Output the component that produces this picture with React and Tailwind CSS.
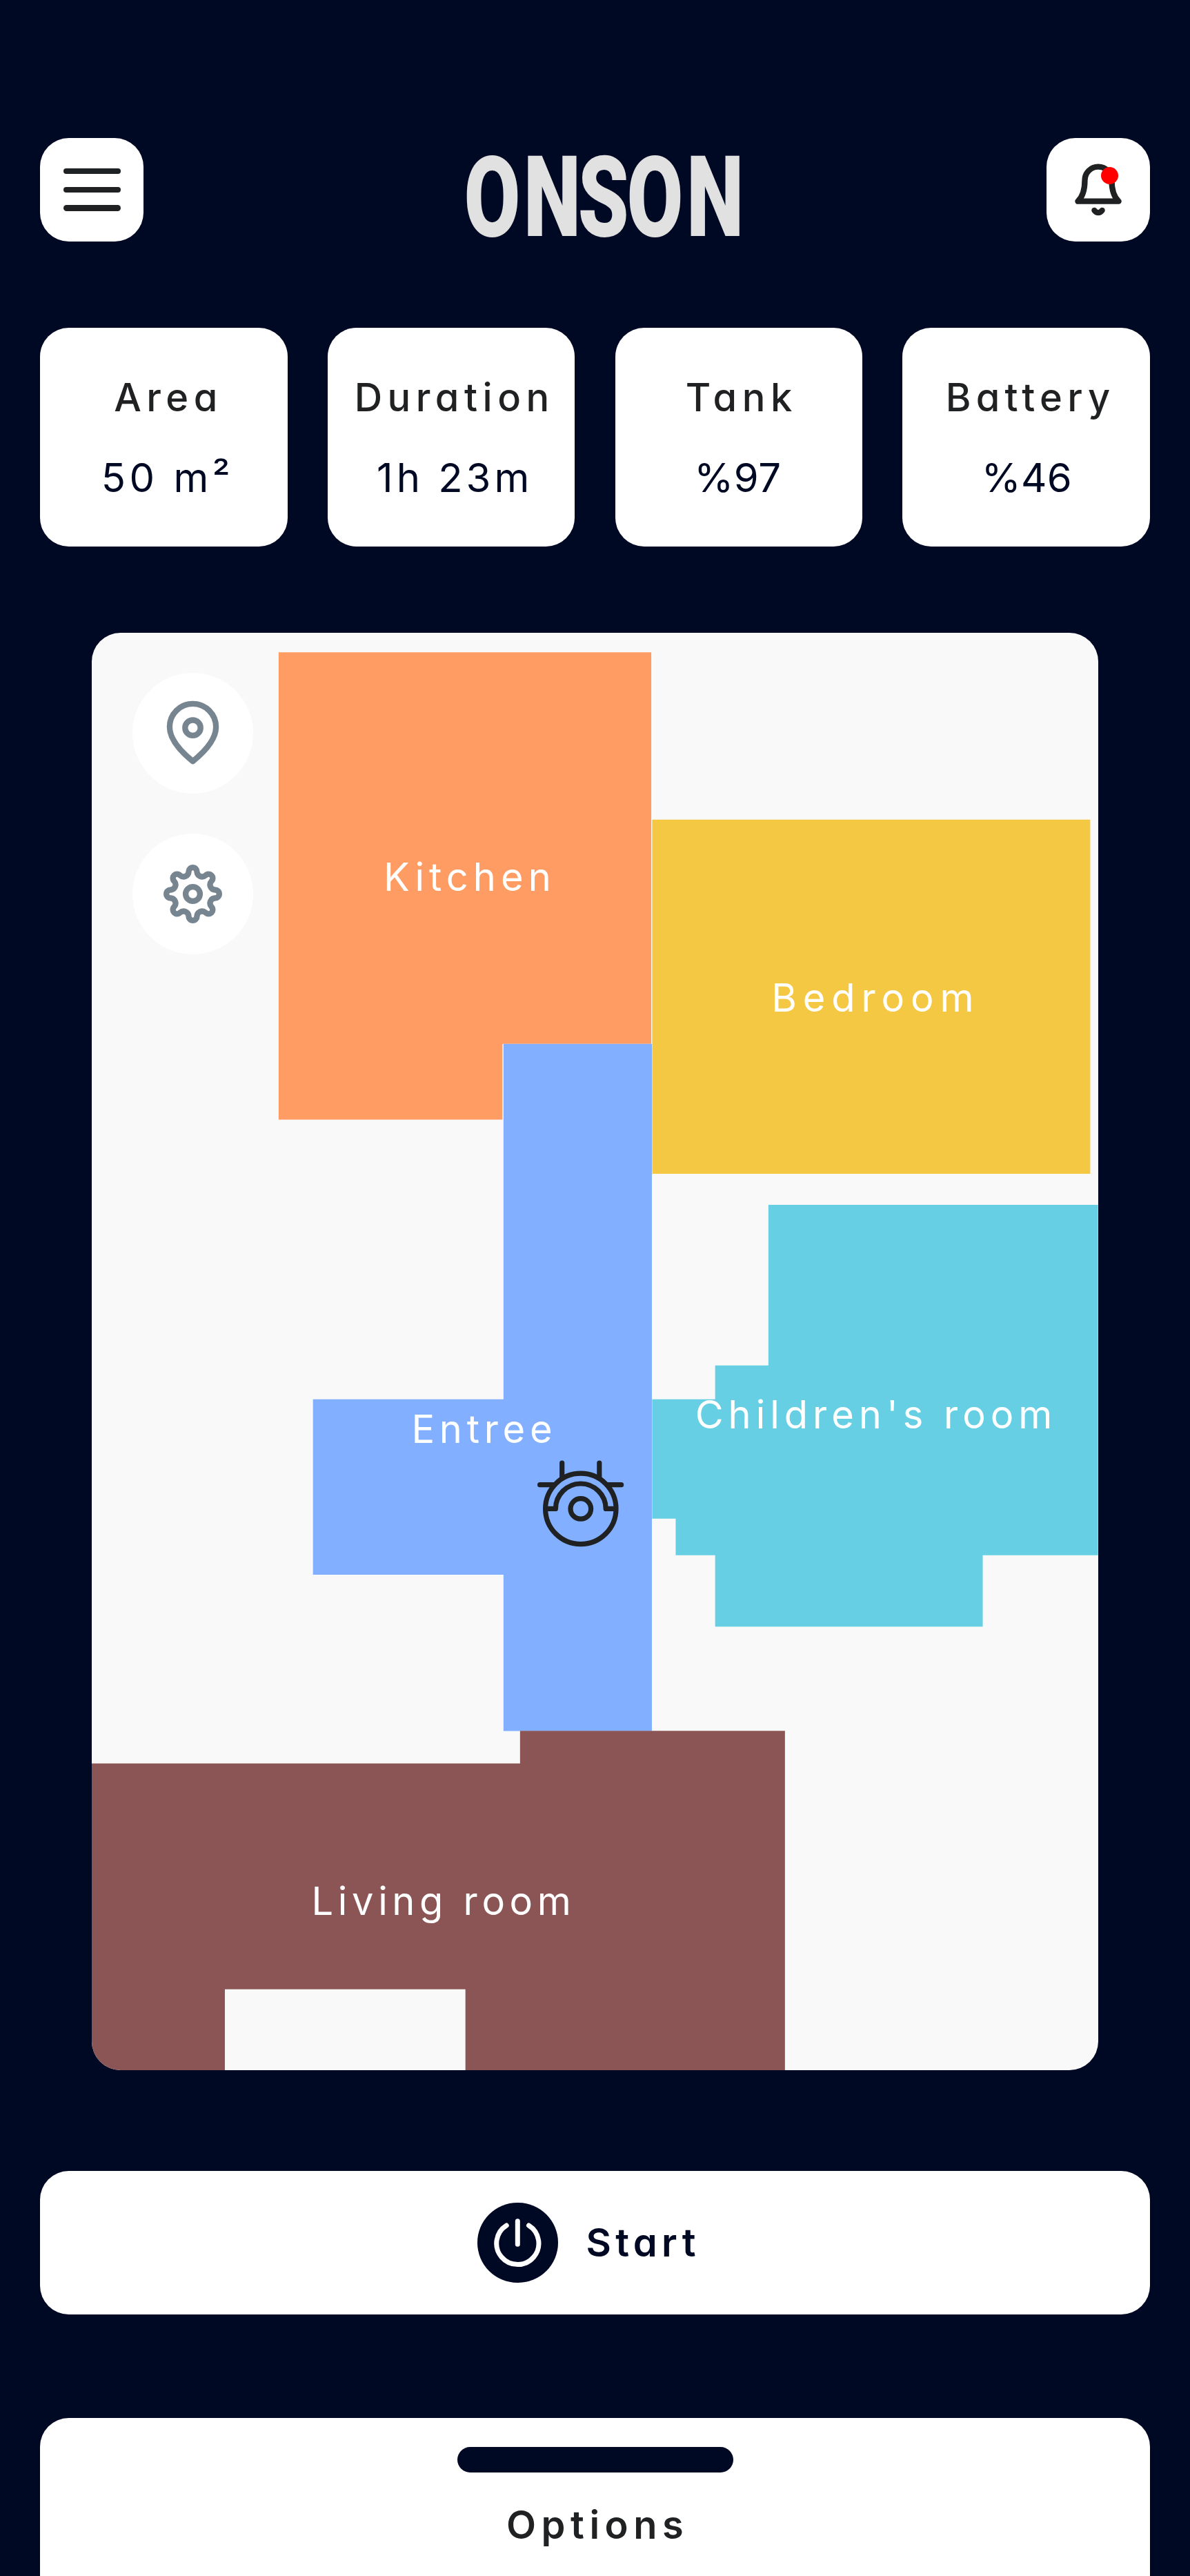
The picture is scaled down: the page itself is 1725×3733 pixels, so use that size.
import React from "react";

const stats = [
  { label: "Area", value: "50 m²", labelClass: "tracking-[7.46px] pl-[13px]", valueClass: "tracking-[5.5px] pl-[10.6px]" },
  { label: "Duration", value: "1h 23m", labelClass: "tracking-[7.5px] pl-[9px]", valueClass: "tracking-[5px] pl-[10px]" },
  { label: "Tank", value: "%97", labelClass: "tracking-[7.6px] pl-[8px]", valueClass: "tracking-[0.6px] pr-[2.6px]" },
  { label: "Battery", value: "%46", labelClass: "tracking-[7.24px] pl-[12px]", valueClass: "tracking-[0.3px] pl-[1.6px]" },
];

const rooms = [
  { name: "Kitchen", className: "left-[422.6px] top-[326.7px] tracking-[7.03px]" },
  { name: "Bedroom", className: "left-[984.9px] top-[501.5px] tracking-[8.9px]" },
  { name: "Entree", className: "left-[463.1px] top-[1126.7px] tracking-[6.73px]" },
  { name: "Children's room", className: "left-[874.3px] top-[1105.4px] tracking-[7px]" },
  { name: "Living room", className: "left-[318.1px] top-[1810px] tracking-[6.67px]" },
];

// Outline of an eight-toothed gear built from tangent arcs around (cx, cy).
function gearPath(cx, cy) {
  const toothR = 6;
  const toothD = 31.5;
  const valleyR = 7.5;
  const valleyD = 35.2;
  const at = (d, deg) => {
    const a = ((deg - 90) * Math.PI) / 180;
    return [cx + d * Math.cos(a), cy + d * Math.sin(a)];
  };
  const tangent = (tooth, valley) => {
    const t = toothR / (toothR + valleyR);
    const x = tooth[0] + (valley[0] - tooth[0]) * t;
    const y = tooth[1] + (valley[1] - tooth[1]) * t;
    return `${x.toFixed(2)} ${y.toFixed(2)}`;
  };
  let d = "";
  for (let i = 0; i < 8; i++) {
    const deg = i * 45;
    const tooth = at(toothD, deg);
    const start = tangent(tooth, at(valleyD, deg - 22.5));
    const end = tangent(tooth, at(valleyD, deg + 22.5));
    d += i === 0 ? `M${start}` : `A${valleyR} ${valleyR} 0 0 0 ${start}`;
    d += `A${toothR} ${toothR} 0 1 1 ${end}`;
  }
  const first = tangent(at(toothD, 0), at(valleyD, -22.5));
  return `${d}A${valleyR} ${valleyR} 0 0 0 ${first}Z`;
}

function MenuButton() {
  return (
    <button className="flex h-[150px] w-[150px] flex-col items-center gap-[18.5px] rounded-[41.67px] bg-white pt-[43.7px]">
      <span className="h-[8.33px] w-[83.33px] rounded-full bg-[#1f2122]" />
      <span className="h-[8.33px] w-[83.33px] rounded-full bg-[#1f2122]" />
      <span className="h-[8.33px] w-[83.33px] rounded-full bg-[#1f2122]" />
    </button>
  );
}

function Logo() {
  return (
    <svg className="h-[118px] w-[400px] overflow-visible" viewBox="0 0 400 118" aria-label="ONSON">
      <text
        transform="scale(0.72 1)"
        x="57.6 178.5 281.5 385.5 506.5"
        y="116.7"
        textAnchor="middle"
        fill="#e1e1e1"
        className="font-['Roboto',sans-serif] text-[164px] font-black"
      >
        ONSON
      </text>
    </svg>
  );
}

function BellButton() {
  return (
    <button className="relative h-[150px] w-[150px] rounded-[41.67px] bg-white">
      <svg
        className="h-full w-full"
        viewBox="0 0 150 150"
        fill="none"
        stroke="#1f2122"
        strokeWidth="8.33"
        strokeLinecap="round"
        strokeLinejoin="round"
      >
        <path d="M45.4 91.7C52 85.5 55.5 74 55.5 61.2A19.5 19.5 0 0 1 94.5 61.2C94.5 74 98 85.5 104.6 91.7Z" />
        <path d="M69.4 104.8Q75 111.6 80.6 104.8" />
      </svg>
      <span className="absolute left-[79.2px] top-[41.7px] h-[25px] w-[25px] rounded-full bg-[#ff0000]" />
    </button>
  );
}

function FloorPlan() {
  return (
    <svg className="absolute inset-0 h-full w-full" viewBox="133.33 916.67 1458.34 2083.33">
      <path fill="#ff9c63" d="M404.2 945H944.4V1512.3H728.7V1622.2H404.2Z" />
      <path fill="#f4c843" d="M945.7 1187.3H1580.7V1700.6H945.7Z" />
      <path
        fill="#66cfe4"
        d="M1114.2 1745.6H1592V2253.4H1424.9V2357H1037V2253.4H979.8V2200.5H945.7V2027.5H1037V1978.5H1114.2Z"
      />
      <path fill="#82afff" d="M730.2 1512.3H945.3V2508.3H730.2V2281.7H454V2027.4H730.2Z" />
      <path fill="#8c5555" d="M133 2555.3H754.2V2508H1138.2V3001H675V2882.4H326.3V3001H133Z" />
    </svg>
  );
}

function Robot() {
  return (
    <svg
      className="absolute left-[638.67px] top-[1193.33px] h-[140px] w-[140px]"
      viewBox="772 2110 140 140"
      fill="none"
      stroke="#1f2122"
      strokeWidth="7.2"
      strokeLinecap="round"
      strokeLinejoin="round"
    >
      <circle cx="841.8" cy="2186.4" r="51.2" />
      <circle cx="841.8" cy="2186.4" r="14.8" />
      <path d="M793 2186.4H805.4A36.4 36.4 0 0 1 878.2 2186.4H890.6" />
      <path d="M814.7 2120V2142M868.8 2120V2142M782.6 2151.7H803M900.6 2151.7H880.4" />
    </svg>
  );
}

function MapCard() {
  return (
    <section className="relative mx-auto mt-[125px] h-[2083.33px] w-[1458.33px] shrink-0 overflow-hidden rounded-[41.67px] bg-[#f9f9f9]">
      <FloorPlan />
      {rooms.map((room) => (
        <span
          key={room.name}
          className={`absolute whitespace-nowrap text-[56px] leading-none text-white ${room.className}`}
        >
          {room.name}
        </span>
      ))}
      <Robot />
      <div className="relative flex w-[291.67px] flex-col items-center gap-[58.33px] pt-[58.33px]">
        <button className="h-[175px] w-[175px] rounded-full bg-white">
          <svg
            className="h-full w-full"
            viewBox="0 0 175 175"
            fill="none"
            stroke="#778591"
            strokeWidth="8.33"
            strokeLinejoin="round"
          >
            <path d="M87.5 128.2C70 114 53.9 97 53.9 78.5A33.6 33.6 0 0 1 121.1 78.5C121.1 97 105 114 87.5 128.2Z" />
            <circle cx="87.5" cy="79.7" r="11.2" />
          </svg>
        </button>
        <button className="h-[175px] w-[175px] rounded-full bg-white">
          <svg className="h-full w-full" viewBox="0 0 175 175" fill="none" stroke="#778591" strokeWidth="8.33">
            <path d={gearPath(87.5, 87.5)} />
            <circle cx="87.5" cy="87.5" r="10.4" />
          </svg>
        </button>
      </div>
    </section>
  );
}

export default function App() {
  return (
    <div className="flex h-[3733px] w-[1725px] flex-col overflow-hidden bg-[#000924] px-[58.33px] pt-[200px] font-['Inter',sans-serif] [font-feature-settings:'cv11']">
      <header className="flex shrink-0 items-start justify-between">
        <MenuButton />
        <div className="pl-[18px] pt-[25px]">
          <Logo />
        </div>
        <BellButton />
      </header>

      <section className="mt-[125px] grid shrink-0 grid-cols-4 gap-[58.33px]">
        {stats.map((stat) => (
          <div
            key={stat.label}
            className="flex h-[316.67px] flex-col gap-[59px] rounded-[41.67px] bg-white pt-[72.65px] text-center whitespace-nowrap"
          >
            <div className={`text-[56px] leading-none font-medium text-[#1f2122] ${stat.labelClass}`}>{stat.label}</div>
            <div className={`text-[58px] leading-none text-[#000924] ${stat.valueClass}`}>{stat.value}</div>
          </div>
        ))}
      </section>

      <MapCard />

      <button className="mt-[145.83px] flex h-[208.33px] shrink-0 items-center justify-center gap-[40.7px] rounded-[41.67px] bg-white pr-[18px]">
        <span className="h-[116.67px] w-[116.67px] rounded-full bg-[#000924]">
          <svg
            className="h-full w-full"
            viewBox="0 0 116.67 116.67"
            fill="none"
            stroke="#ffffff"
            strokeWidth="7"
            strokeLinecap="round"
          >
            <path d="M42.2 33A30.6 30.6 0 1 0 74.5 33" />
            <path d="M58.33 26.7V60.2" />
          </svg>
        </span>
        <span className="text-[56px] leading-none font-semibold tracking-[6.3px] text-[#000924]">Start</span>
      </button>

      <section className="mt-[150px] flex h-[260px] shrink-0 flex-col items-center gap-[47.3px] rounded-t-[41.67px] bg-white pt-[41.67px]">
        <span className="h-[37.5px] w-[400px] rounded-full bg-[#000924]" />
        <h2 className="pl-[7.4px] text-[56px] leading-none font-semibold tracking-[7.54px] text-[#1f2122]">Options</h2>
      </section>
    </div>
  );
}
